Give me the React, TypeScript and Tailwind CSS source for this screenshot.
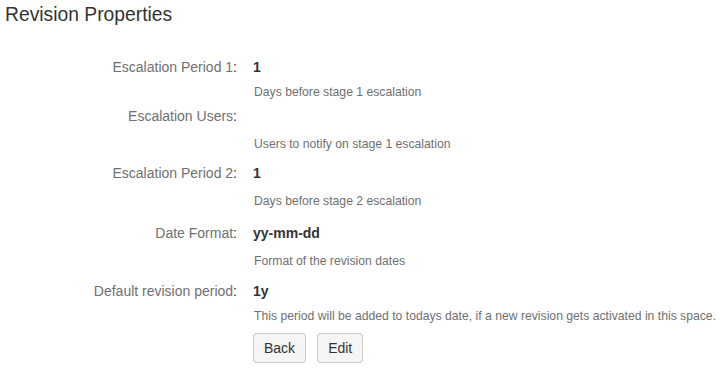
import React from 'react';

interface Field {
  label: string;
  value: string;
  description: string;
  rowClass: string;
  descClass: string;
}

const fields: Field[] = [
  { label: 'Escalation Period 1', value: '1', description: 'Days before stage 1 escalation', rowClass: 'mt-[30px]', descClass: 'mt-[7px]' },
  { label: 'Escalation Users', value: '', description: 'Users to notify on stage 1 escalation', rowClass: 'mt-[6px]', descClass: 'mt-[10px]' },
  { label: 'Escalation Period 2', value: '1', description: 'Days before stage 2 escalation', rowClass: 'mt-[11px]', descClass: 'mt-[10px]' },
  { label: 'Date Format', value: 'yy-mm-dd', description: 'Format of the revision dates', rowClass: 'mt-[14px]', descClass: 'mt-[10px]' },
  {
    label: 'Default revision period',
    value: '1y',
    description: 'This period will be added to todays date, if a new revision gets activated in this space.',
    rowClass: 'mt-[12px]',
    descClass: 'mt-[7px]',
  },
];

const FieldRow: React.FC<{ field: Field }> = ({ field }) => (
  <div className={field.rowClass}>
    <div className="flex h-5 items-center text-[14px] leading-5">
      <div className="w-[237px] shrink-0 text-right text-[#707070]">
        {field.label}
        <span className="text-[#333333]">:</span>
      </div>
      <div className="pl-4 font-bold text-[#333333]">{field.value}</div>
    </div>
    <div className={`${field.descClass} pl-[254px] text-[12.2px] leading-4 text-[#707070] whitespace-nowrap`}>
      {field.description}
    </div>
  </div>
);

export default function App() {
  return (
    <div className="h-[370px] w-[720px] overflow-hidden bg-white font-['Liberation_Sans',Arial,sans-serif]">
      <h1 className="pl-[5px] pt-[3px] text-[19.3px] leading-6 font-normal text-[#333333]">Revision Properties</h1>
      {fields.map(f => (
        <FieldRow key={f.label} field={f} />
      ))}
      <div className="mt-[9px] flex gap-[11px] pl-[253px]">
        <button className="h-[30px] rounded-[3px] border border-[#cccccc] bg-[#f5f5f5] px-[10px] text-[14px] text-[#333333]">
          Back
        </button>
        <button className="h-[30px] rounded-[3px] border border-[#cccccc] bg-[#f5f5f5] px-[10px] text-[14px] text-[#333333]">
          Edit
        </button>
      </div>
    </div>
  );
}
